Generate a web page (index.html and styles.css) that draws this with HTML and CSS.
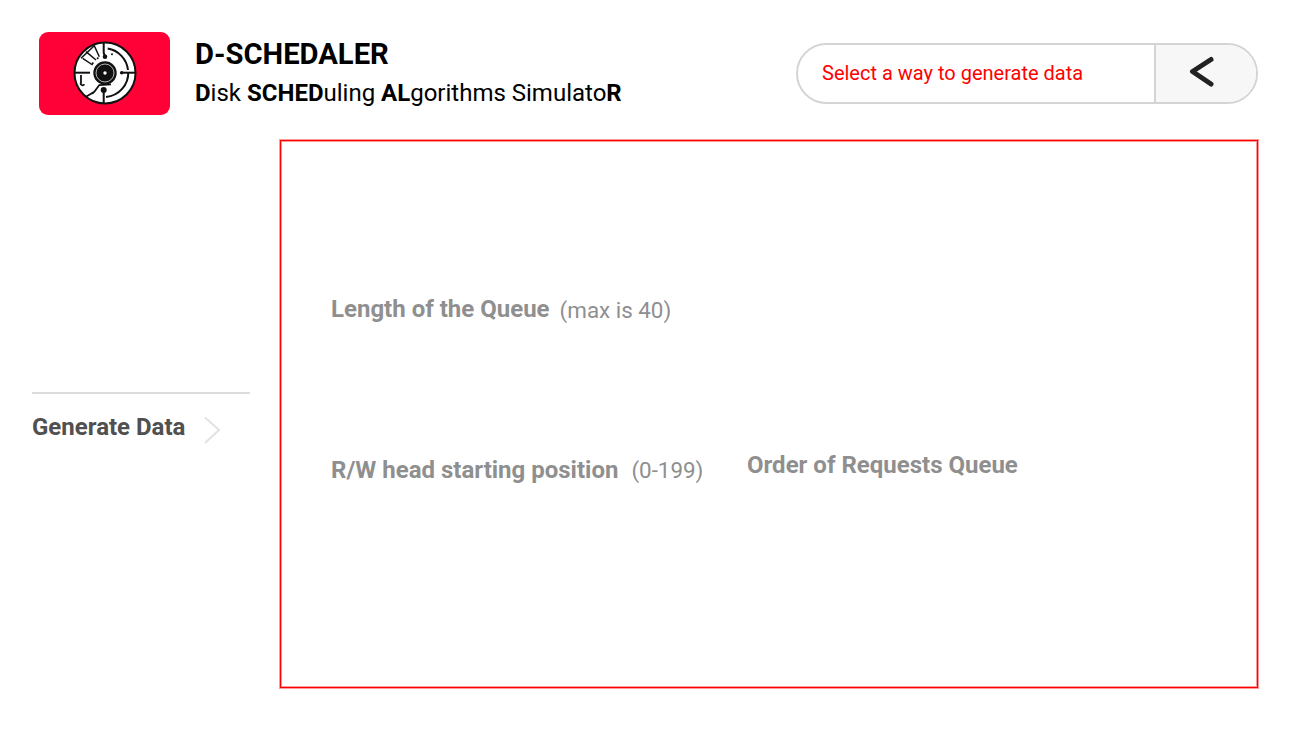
FILE: index.html
```html
<!DOCTYPE html>
<html lang="en">
<head>
<meta charset="utf-8">
<title>D-SCHEDALER</title>
<link rel="stylesheet" href="styles.css">
</head>
<body>
<div class="page">
  <header class="header">
    <div class="brand">
      <div class="logo">
        <svg class="disk" viewBox="0 0 64 64" width="64" height="64" aria-hidden="true">
          <circle cx="32" cy="32" r="30.5" fill="#fff" stroke="#111" stroke-width="2"/>
          <g fill="none" stroke="#111" stroke-width="2">
            <path d="M1.500 31.700H17"/>
            <path d="M30.700 49V63"/>
            <path d="M33 56A24.500 24.500 0 0 0 55.300 31"/>
            <path d="M55 29A24.500 24.500 0 0 0 34.700 7.500"/>
            <path d="M48.700 31.700H63"/>
            <path d="M30.700 1V12L32 15"/>
            <path d="M8 17.300L21.300 4.700L26.300 15.700M9.700 17.300L19.700 24M13 10.700L23 19" stroke-width="1.500"/>
            <path d="M13 55.700L21.300 50.700L26.300 44L38 43.300" stroke-width="1.800"/>
            <path d="M8 34V41.500A1.800 1.800 0 0 0 11.300 43.300" stroke-width="1.800"/>
          </g>
          <circle cx="32" cy="32" r="11.700" fill="#111"/>
          <circle cx="32" cy="32" r="9" fill="none" stroke="#ddd" stroke-width="0.800"/>
          <circle cx="32" cy="32" r="1.700" fill="#fff"/>
          <circle cx="30.700" cy="49" r="3" fill="#111"/>
          <circle cx="32" cy="15.700" r="2.300" fill="#111"/>
          <circle cx="48.700" cy="31.700" r="1.800" fill="#111"/>
          <circle cx="39" cy="13.300" r="1" fill="#111"/>
          <circle cx="24.700" cy="17.300" r="1" fill="#111"/>
          <circle cx="19.700" cy="22.300" r="1" fill="#111"/>
          <circle cx="19.700" cy="52.300" r="1" fill="#111"/>
        </svg>
      </div>
      <div class="titles">
        <h1 class="title">D-SCHEDALER</h1>
        <p class="subtitle"><b>D</b>isk <b>SCHED</b>uling <b>AL</b>gorithms Simulato<b>R</b></p>
      </div>
    </div>
    <div class="pill">
      <div class="pill-text">Select a way to generate data</div>
      <button class="pill-btn" type="button" aria-label="Back">
        <svg viewBox="0 0 26 34" width="26" height="34" aria-hidden="true">
          <path d="M22 3.500L3.500 15.500L22 28" fill="none" stroke="#222" stroke-width="5" stroke-linecap="round" stroke-linejoin="round"/>
        </svg>
      </button>
    </div>
  </header>
  <div class="body">
    <aside class="side">
      <div class="side-item">
        <span class="side-label">Generate Data</span>
        <svg class="side-arrow" viewBox="0 0 18 28" width="18" height="28" aria-hidden="true">
          <path d="M2 1.500L16 14L2 27" fill="none" stroke="#e2e2e2" stroke-width="2"/>
        </svg>
      </div>
    </aside>
    <main class="panel">
      <div class="row row-length">
        <span class="label">Length of the Queue</span>
        <span class="hint">(max is 40)</span>
      </div>
      <div class="row row-head">
        <div class="head-field">
          <span class="label">R/W head starting position</span>
          <span class="hint hint-wide">(0-199)</span>
        </div>
        <span class="label label-order">Order of Requests Queue</span>
      </div>
    </main>
  </div>
</div>
</body>
</html>
```
FILE: styles.css
```css
* { box-sizing: border-box; }
html, body { margin: 0; padding: 0; background: #fff; }
body { font-family: Roboto, "Liberation Sans", sans-serif; }
.page { width: 1300px; height: 732px; padding: 32px 42px 0 32px; overflow: hidden; }
.header { display: flex; justify-content: space-between; align-items: center; height: 83px; }
.brand { display: flex; align-items: center; padding-left: 7px; }
.logo { width: 131px; height: 83px; background: #ff0037; border-radius: 9px; display: flex; align-items: center; justify-content: center; }
.disk { display: block; margin-bottom: 1px; }
.titles { margin-left: 25px; }
.title { margin: -2px 0 0; font-size: 29.2px; line-height: 32px; font-weight: 700; color: #000; }
.subtitle { margin: 9px 0 0; font-size: 24px; line-height: 28px; font-weight: 400; color: #000; }
.subtitle b { font-weight: 700; }
.pill { display: flex; width: 462px; height: 61px; margin-top: -1px; margin-left: auto; border: 2px solid #d4d4d4; border-radius: 31px; overflow: hidden; }
.pill-text { flex: 1; padding-left: 24px; display: flex; align-items: center; color: #ff0000; font-size: 20px; }
.pill-btn { width: 102px; padding: 0 9px 0 0; border: 0; border-left: 2px solid #d4d4d4; background: #f7f7f7; display: flex; align-items: center; justify-content: center; }
.body { display: flex; margin-top: 25px; }
.side { width: 248px; padding-top: 252px; }
.side-item { width: 218px; border-top: 2px solid #dcdcdc; padding-top: 20px; display: flex; align-items: flex-start; }
.side-label { font-size: 24px; line-height: 27px; font-weight: 700; color: #505050; }
.side-arrow { margin-left: 18px; margin-top: 2px; }
.panel { width: 978px; height: 548px; border: 1px solid #ff0000; box-shadow: 0 0 0 1px #ff9a9a, inset 0 0 0 1px #ff9a9a; padding: 155px 0 0 50px; }
.row { display: flex; align-items: flex-start; }
.row-head { margin-top: 128px; }
.head-field { width: 416px; padding-top: 5px; display: flex; align-items: flex-start; }
.label { font-size: 24px; line-height: 27px; font-weight: 700; color: #8f8f8f; }
.hint { margin: 0.500px 0 0 10px; font-size: 22.400px; line-height: 27px; font-weight: 400; color: #8f8f8f; }
.hint-wide { margin-left: 13px; }
```
